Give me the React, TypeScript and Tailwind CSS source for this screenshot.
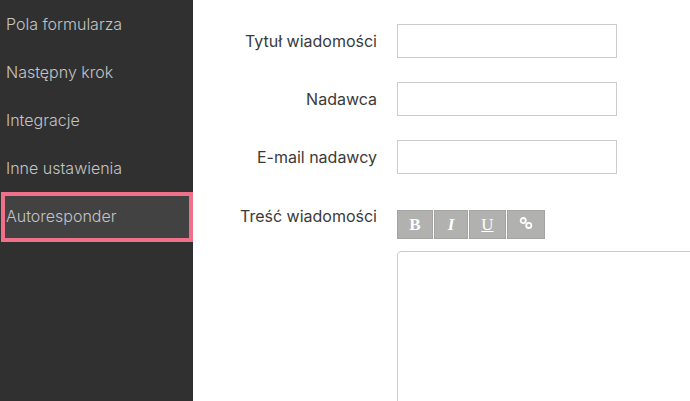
import React from 'react';

const menuItems = ['Pola formularza', 'Następny krok', 'Integracje', 'Inne ustawienia'];
const fields = ['Tytuł wiadomości', 'Nadawca', 'E-mail nadawcy'];

function ToolButton({ className, children }: { className: string; children: React.ReactNode }) {
  return (
    <button className={`h-[29px] bg-[#b1b1b0] border border-[#a3a3a3] flex items-center justify-center text-white text-[17px] font-bold ${className}`} style={{ fontFamily: '"Liberation Serif", serif' }}>
      {children}
    </button>
  );
}

export default function App() {
  return (
    <div className="w-[690px] h-[401px] overflow-hidden flex bg-white text-[16px]" style={{ fontFamily: 'Inter, sans-serif' }}>
      <aside className="w-[193px] shrink-0 bg-[#303030] text-[#c4c4c4] font-light">
        {menuItems.map((item) => (
          <div key={item} className="h-[48px] flex items-center pl-[6px]">{item}</div>
        ))}
        <div className="h-[50px] ml-[1px] flex items-center pl-[1px] pb-[2px] border-[4px] border-[#f0708a] bg-[#424242]">Autoresponder</div>
      </aside>
      <main className="flex-1 pt-[24px] text-[#3a3a3a]">
        {fields.map((field) => (
          <div key={field} className="flex items-center mb-[24px]">
            <label className="w-[184px] text-right">{field}</label>
            <input className="ml-[20px] w-[220px] h-[34px] border border-[#cccccc] bg-white" />
          </div>
        ))}
        <div className="flex items-start pt-[10px]">
          <label className="w-[184px] text-right -mt-[4px]">Treść wiadomości</label>
          <div className="ml-[20px] pt-[2px] flex-1">
            <div className="flex gap-[1px]">
              <ToolButton className="w-[36px]">B</ToolButton>
              <ToolButton className="w-[34px] italic">I</ToolButton>
              <ToolButton className="w-[37px] font-normal"><span className="underline">U</span></ToolButton>
              <ToolButton className="w-[38px]">
                <svg width="14" height="12" viewBox="0 0 14 12" fill="none" stroke="white" strokeWidth="1.8" className="-mt-[3px]">
                  <circle cx="4.2" cy="3.6" r="2.6" />
                  <circle cx="9.8" cy="8.4" r="2.6" />
                </svg>
              </ToolButton>
            </div>
            <div className="mt-[12px] h-[200px] w-[400px] border border-[#cccccc] rounded-tl-[4px] bg-white" />
          </div>
        </div>
      </main>
    </div>
  );
}
